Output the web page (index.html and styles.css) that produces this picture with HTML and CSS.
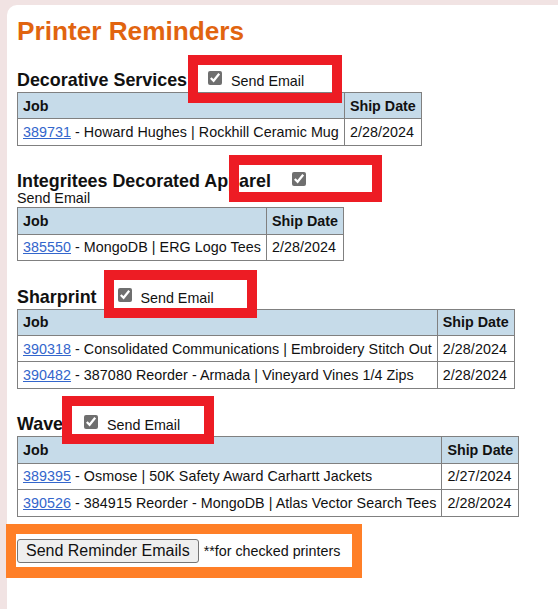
FILE: index.html
```html
<!DOCTYPE html>
<html lang="en">
<head>
<meta charset="utf-8">
<title>Printer Reminders</title>
<link rel="stylesheet" href="styles.css">
</head>
<body>
<div class="panel">
  <h1 class="title">Printer Reminders</h1>
  <form class="reminders">
    <table class="printer">
      <caption><span class="name">Decorative Services</span> <label class="send"><input type="checkbox" checked> Send Email</label></caption>
      <thead><tr><th>Job</th><th>Ship Date</th></tr></thead>
      <tbody>
        <tr><td><a href="#">389731</a> - Howard Hughes | Rockhill Ceramic Mug</td><td>2/28/2024</td></tr>
      </tbody>
    </table>

    <table class="printer">
      <caption><span class="name">Integritees Decorated Apparel</span> <label class="send"><input type="checkbox" checked> Send Email</label></caption>
      <thead><tr><th>Job</th><th>Ship Date</th></tr></thead>
      <tbody>
        <tr><td><a href="#">385550</a> - MongoDB | ERG Logo Tees</td><td>2/28/2024</td></tr>
      </tbody>
    </table>

    <table class="printer">
      <caption><span class="name">Sharprint</span> <label class="send"><input type="checkbox" checked> Send Email</label></caption>
      <thead><tr><th>Job</th><th>Ship Date</th></tr></thead>
      <tbody>
        <tr><td><a href="#">390318</a> - Consolidated Communications | Embroidery Stitch Out</td><td>2/28/2024</td></tr>
        <tr><td><a href="#">390482</a> - 387080 Reorder - Armada | Vineyard Vines 1/4 Zips</td><td>2/28/2024</td></tr>
      </tbody>
    </table>

    <table class="printer">
      <caption><span class="name">Wave</span> <label class="send"><input type="checkbox" checked> Send Email</label></caption>
      <thead><tr><th>Job</th><th>Ship Date</th></tr></thead>
      <tbody>
        <tr><td><a href="#">389395</a> - Osmose | 50K Safety Award Carhartt Jackets</td><td>2/27/2024</td></tr>
        <tr><td><a href="#">390526</a> - 384915 Reorder - MongoDB | Atlas Vector Search Tees</td><td>2/28/2024</td></tr>
      </tbody>
    </table>

    <div class="actions"><button type="button" class="send-btn">Send Reminder Emails</button> <span class="note">**for checked printers</span></div>
  </form>
</div>

<div class="mark mark-red mark-1"></div>
<div class="mark mark-red mark-2"></div>
<div class="mark mark-red mark-3"></div>
<div class="mark mark-red mark-4"></div>
<div class="mark mark-orange mark-5"></div>
</body>
</html>
```

FILE: styles.css
```css
html, body {
  margin: 0;
  padding: 0;
}
body {
  background: #f1e3e3;
  font-family: "Liberation Sans", Arial, sans-serif;
  font-size: 14.3px;
  color: #111;
  min-height: 609px;
  position: relative;
  overflow: hidden;
}
.panel {
  margin: 5px 0 0 7px;
  background: #fff;
  border-top-left-radius: 10px;
  min-height: 604px;
  padding: 11px 10px 0;
  box-sizing: border-box;
}
.title {
  margin: 0 0 23px;
  font-size: 26.2px;
  font-weight: bold;
  color: #e1640f;
  line-height: normal;
}
.printer {
  border-collapse: collapse;
  margin: 0 0 25.5px;
}
.printer caption {
  text-align: left;
  padding-bottom: 2px;
  font-size: 14.3px;
  line-height: 14px;
}
.name {
  font-size: 17.9px;
  font-weight: bold;
  line-height: 20px;
}
.send {
  margin-left: 13px;
}
.send input {
  width: 14px;
  height: 14px;
  margin: 0 5px 0 4px;
  accent-color: #6f6f6f;
  vertical-align: 1px;
}
.printer th,
.printer td {
  border: 1px solid #808080;
  padding: 4.5px 5px;
  text-align: left;
  white-space: nowrap;
  line-height: 16.4px;
}
.printer th {
  background: #c6dbe9;
  font-weight: bold;
}
.printer td {
  letter-spacing: 0.05px;
}
.printer a {
  color: #3366cc;
}
.actions {
  margin-top: -3.5px;
  display: flex;
  align-items: center;
  gap: 5px;
}
.send-btn {
  font-family: "Liberation Sans", Arial, sans-serif;
  font-size: 16px;
  color: #111;
  background: #efefef;
  border: 1px solid #767676;
  border-radius: 3px;
  padding: 0 8px;
  height: 24px;
  line-height: 20px;
}
.note {
  font-size: 14.3px;
}
.mark {
  position: absolute;
  box-sizing: border-box;
  border: 10px solid;
}
.mark-red {
  border-color: #ed1c24;
}
.mark-orange {
  border-color: #ff7f27;
  border-bottom-width: 11px;
}
.mark-1 { left: 188px; top: 55px; width: 154px; height: 48px; }
.mark-2 { left: 229px; top: 155px; width: 153px; height: 47px; }
.mark-3 { left: 104px; top: 270px; width: 153px; height: 48px; }
.mark-4 { left: 62px; top: 396px; width: 152px; height: 48px; }
.mark-5 { left: 6px; top: 524px; width: 356px; height: 54px; }
```
